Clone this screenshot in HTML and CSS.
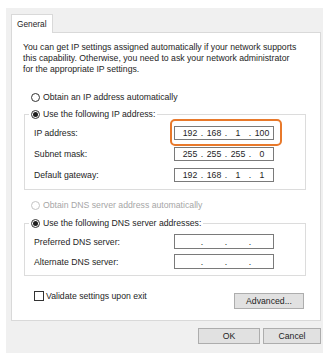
FILE: index.html
```html
<!DOCTYPE html>
<html lang="en">
<head>
    <meta charset="UTF-8">
    <title>Internet Protocol Version 4 (TCP/IPv4) Properties</title>
    <link rel="stylesheet" href="styles.css">
</head>
<body>
    <div class="dialog">
        <div class="tabs">
            <span class="tab">General</span>
        </div>

        <div class="panel">
            <p class="intro">You can get IP settings assigned automatically if your network supports<br>this capability. Otherwise, you need to ask your network administrator<br>for the appropriate IP settings.</p>

            <div class="option first-option"><span class="radio"></span>Obtain an IP address automatically</div>

            <fieldset class="group ip-group">
                <legend class="option"><span class="radio checked"></span>Use the following IP address:</legend>
                <div class="field-row">
                    <span class="label">IP address:</span>
                    <span class="ip-box highlight">
                        <span class="octet">192</span><span class="dot">.</span><span class="octet">168</span><span class="dot">.</span><span class="octet">1</span><span class="dot">.</span><span class="octet">100</span>
                    </span>
                </div>
                <div class="field-row">
                    <span class="label">Subnet mask:</span>
                    <span class="ip-box">
                        <span class="octet">255</span><span class="dot">.</span><span class="octet">255</span><span class="dot">.</span><span class="octet">255</span><span class="dot">.</span><span class="octet">0</span>
                    </span>
                </div>
                <div class="field-row">
                    <span class="label">Default gateway:</span>
                    <span class="ip-box">
                        <span class="octet">192</span><span class="dot">.</span><span class="octet">168</span><span class="dot">.</span><span class="octet">1</span><span class="dot">.</span><span class="octet">1</span>
                    </span>
                </div>
            </fieldset>

            <div class="option disabled dns-option"><span class="radio"></span>Obtain DNS server address automatically</div>

            <fieldset class="group dns-group">
                <legend class="option"><span class="radio checked"></span>Use the following DNS server addresses:</legend>
                <div class="field-row">
                    <span class="label">Preferred DNS server:</span>
                    <span class="ip-box tall">
                        <span class="octet"></span><span class="dot">.</span><span class="octet"></span><span class="dot">.</span><span class="octet"></span><span class="dot">.</span><span class="octet"></span>
                    </span>
                </div>
                <div class="field-row">
                    <span class="label">Alternate DNS server:</span>
                    <span class="ip-box tall">
                        <span class="octet"></span><span class="dot">.</span><span class="octet"></span><span class="dot">.</span><span class="octet"></span><span class="dot">.</span><span class="octet"></span>
                    </span>
                </div>
            </fieldset>

            <div class="panel-footer">
                <div class="option"><span class="checkbox"></span>Validate settings upon exit</div>
                <button class="button advanced">Advanced...</button>
            </div>
        </div>

        <div class="dialog-buttons">
            <button class="button ok">OK</button>
            <button class="button cancel">Cancel</button>
        </div>
    </div>
</body>
</html>
```

FILE: styles.css
```css
* {
    margin: 0;
    padding: 0;
    box-sizing: border-box;
}

body {
    background: #ffffff;
    font-family: "Liberation Sans", Arial, sans-serif;
    font-size: 8.7px;
    color: #1e1e1e;
}

/* Dialog window */
.dialog {
    margin: 8px 0 0 6px;
    width: 317px;
    height: 345px;
    background: #f0f0f0;
    padding: 6px 2px 0 5px;
}

/* Tab strip */
.tabs {
    display: flex;
    height: 18px;
}

.tab {
    position: relative;
    z-index: 1;
    width: 42px;
    height: 19px;
    background: #ffffff;
    border: 1px solid #d9d9d9;
    border-bottom: none;
    padding: 4px 0 0 5px;
    line-height: 11px;
    font-size: 8.3px;
}

.panel {
    height: 289px;
    background: #ffffff;
    border: 1px solid #d9d9d9;
    padding: 9px 7px 0 12px;
}

.intro {
    line-height: 11px;
    margin-left: -1px;
    white-space: nowrap;
}

/* Radio / checkbox rows */
.option {
    display: flex;
    align-items: center;
    gap: 3px;
    height: 12px;
    line-height: 12px;
    white-space: nowrap;
}

.first-option {
    margin: 16px 0 0 7px;
}

.dns-option {
    margin: 9px 0 0 7px;
}

.option.disabled {
    color: #a6a6a6;
}

.radio {
    width: 9px;
    height: 9px;
    border: 1px solid #333333;
    border-radius: 50%;
    display: flex;
    align-items: center;
    justify-content: center;
    background: #ffffff;
}

.radio.checked::after {
    content: "";
    width: 5px;
    height: 5px;
    border-radius: 50%;
    background: #1e1e1e;
}

.disabled .radio {
    border-color: #c4c4c4;
}

.checkbox {
    width: 10px;
    height: 10px;
    border: 1px solid #333333;
    background: #ffffff;
}

/* Group boxes */
.group {
    border: 1px solid #dcdcdc;
    margin: 5px 7px 0 0;
    padding: 0 0 7px 9px;
}

.group legend {
    margin-left: -5px;
    padding: 0 2px;
}

.dns-group {
    margin-top: 6px;
    padding-bottom: 6px;
}

.field-row {
    display: flex;
    align-items: center;
    margin-top: 7px;
}

.ip-group .field-row:first-of-type {
    margin-top: 6px;
}

.dns-group .field-row {
    margin-top: 5px;
}

.label {
    width: 140px;
}

/* IP address boxes */
.ip-box {
    display: flex;
    align-items: center;
    width: 100px;
    height: 14px;
    border: 1px solid #7a7a7a;
    padding-left: 5px;
    background: #ffffff;
}

.ip-box.tall {
    height: 15px;
}

.octet {
    width: 20px;
    text-align: center;
}

.dot {
    width: 4px;
    text-align: center;
}

.highlight {
    position: relative;
}

/* Orange callout around the IP address field */
.highlight::after {
    content: "";
    position: absolute;
    top: -8px;
    bottom: -7px;
    left: -5px;
    right: -9px;
    border: 2px solid #e8792b;
    border-radius: 5px;
}

.panel-footer {
    display: flex;
    justify-content: space-between;
    align-items: flex-start;
    margin: 15px 9px 0 10px;
}

.panel-footer .option {
    height: 10px;
    gap: 2px;
}

/* Buttons */
.button {
    font-family: inherit;
    font-size: inherit;
    color: #1e1e1e;
    background: #e1e1e1;
    border: 1px solid #adadad;
    height: 16px;
    line-height: 14px;
}

.advanced {
    width: 70px;
    margin-top: 2px;
}

.dialog-buttons {
    display: flex;
    justify-content: flex-end;
    gap: 3px;
    margin-top: 7px;
}

.ok {
    width: 62px;
}

.cancel {
    width: 58px;
}
```
